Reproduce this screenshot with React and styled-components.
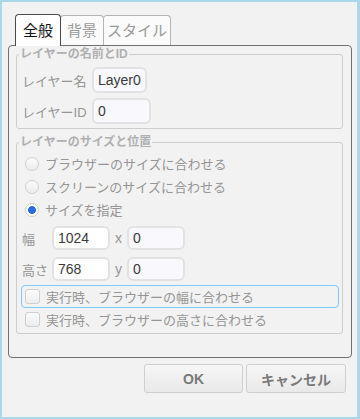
import React, { useState } from 'react';
import styled, { createGlobalStyle } from 'styled-components';

const GlobalStyle = createGlobalStyle`
  html, body {
    margin: 0;
    padding: 0;
    background: #f2f2f2;
  }
  * {
    box-sizing: border-box;
  }
`;

const FONT = `"Liberation Sans", "Noto Sans CJK JP", sans-serif`;

function App() {
  const [tab, setTab] = useState(0);
  const [mode, setMode] = useState(2);
  const [fitW, setFitW] = useState(false);
  const [fitH, setFitH] = useState(false);

  const tabs = [
    { label: '全般', w: 46 },
    { label: '背景', w: 44 },
    { label: 'スタイル', w: 68 },
  ];

  const radios = [
    'ブラウザーのサイズに合わせる',
    'スクリーンのサイズに合わせる',
    'サイズを指定',
  ];

  return (
    <>
      <GlobalStyle />
      <StDialog>
        <StTabs>
          {tabs.map((t, i) => (
            <StTab key={t.label} $w={t.w} $active={tab === i} onClick={() => setTab(i)}>
              {t.label}
            </StTab>
          ))}
        </StTabs>

        <StPanel>
          <StGroup>
            <StLegend>レイヤーの名前とID</StLegend>
            <StStack $pt={6} $gap={5}>
              <StRow>
                <StLabel $w={70}>レイヤー名</StLabel>
                <StInput $w={55} $h={26} $soft defaultValue='Layer0' />
              </StRow>
              <StRow>
                <StLabel $w={70}>レイヤーID</StLabel>
                <StInput $w={59} $h={26} $soft defaultValue='0' />
              </StRow>
            </StStack>
            <StSpacer $h={4} />
          </StGroup>

          <StGroup $mt={6}>
            <StLegend>レイヤーのサイズと位置</StLegend>
            <StStack $pt={3}>
              {radios.map((r, i) => (
                <StOption key={r} onClick={() => setMode(i)}>
                  <StRadio $checked={mode === i} />
                  {r}
                </StOption>
              ))}
              <StRow $mt={5}>
                <StLabel $w={30}>幅</StLabel>
                <StInput $w={58} $h={24} defaultValue='1024' />
                <StAxis>x</StAxis>
                <StInput $w={58} $h={24} $soft defaultValue='0' />
              </StRow>
              <StRow $mt={7}>
                <StLabel $w={30}>高さ</StLabel>
                <StInput $w={58} $h={24} defaultValue='768' />
                <StAxis>y</StAxis>
                <StInput $w={58} $h={24} $soft defaultValue='0' />
              </StRow>
              <StCheckRow $mt={4} $focus onClick={() => setFitW(!fitW)}>
                <StCheck $checked={fitW} />
                実行時、ブラウザーの幅に合わせる
              </StCheckRow>
              <StCheckRow onClick={() => setFitH(!fitH)}>
                <StCheck $checked={fitH} />
                実行時、ブラウザーの高さに合わせる
              </StCheckRow>
            </StStack>
            <StSpacer $h={2} />
          </StGroup>
        </StPanel>

        <StFooter>
          <StButton $w={99}>OK</StButton>
          <StButton $w={100}>キャンセル</StButton>
        </StFooter>
      </StDialog>
    </>
  );
}

export default App;

const StDialog = styled.div`
  width: 360px;
  height: 419px;
  border-style: solid;
  border-color: #a9d8e8;
  border-width: 2px 3px 2px 2px;
  background: #f2f2f2;
  padding: 12px 5px 0 6px;
  font-family: ${FONT};
  display: flex;
  flex-direction: column;
`;

const StTabs = styled.div`
  display: flex;
  align-items: flex-end;
  height: 31px;
  padding-left: 7px;
`;

const StTab = styled.div`
  position: relative;
  width: ${(p) => p.$w}px;
  height: ${(p) => (p.$active ? 32 : 30)}px;
  margin-bottom: ${(p) => (p.$active ? -1 : 0)}px;
  margin-left: ${(p) => (p.$active ? 0 : -1)}px;
  z-index: ${(p) => (p.$active ? 2 : 1)};
  border: 1px solid ${(p) => (p.$active ? '#4a4a4a' : '#b4b4b4')};
  border-bottom: none;
  border-radius: 4px 4px 0 0;
  background: ${(p) => (p.$active ? '#ffffff' : '#fbfbfb')};
  color: ${(p) => (p.$active ? '#111111' : '#9a9a9a')};
  font-size: 15px;
  line-height: ${(p) => (p.$active ? 31 : 29)}px;
  text-align: center;
  cursor: pointer;
  &:first-child {
    margin-left: 0;
  }
`;

const StPanel = styled.div`
  height: 313px;
  border: 1px solid #707070;
  border-radius: 4px;
  padding: 1px 8px 0 7px;
`;

const StGroup = styled.fieldset`
  margin: ${(p) => p.$mt || 0}px 0 0;
  padding: 0 0 0 5px;
  min-width: 0;
  border: 1px solid #cdcdcd;
  border-radius: 3px;
`;

const StLegend = styled.legend`
  margin-left: -3px;
  padding: 0 1px;
  font-family: ${FONT};
  font-size: 12px;
  font-weight: bold;
  line-height: 14px;
  color: #b0b0b0;
`;

const StStack = styled.div`
  display: flex;
  flex-direction: column;
  gap: ${(p) => p.$gap || 0}px;
  padding-top: ${(p) => p.$pt || 0}px;
`;

const StSpacer = styled.div`
  height: ${(p) => p.$h}px;
`;

const StRow = styled.div`
  display: flex;
  align-items: center;
  margin-top: ${(p) => p.$mt || 0}px;
`;

const StLabel = styled.span`
  width: ${(p) => p.$w}px;
  flex: none;
  font-size: 13px;
  color: #959595;
  white-space: nowrap;
`;

const StInput = styled.input`
  width: ${(p) => p.$w}px;
  height: ${(p) => p.$h}px;
  border: 2px solid #e2e2e2;
  border-radius: 6px;
  background: ${(p) => (p.$soft ? '#f8f8fd' : '#ffffff')};
  padding: 0 4px;
  font-family: ${FONT};
  font-size: 14px;
  color: #3a3a3a;
  &:focus {
    outline: none;
  }
`;

const StAxis = styled.span`
  width: 17px;
  text-align: center;
  font-size: 14px;
  color: #959595;
`;

const StOption = styled.div`
  display: flex;
  align-items: center;
  height: 23px;
  padding-left: 3px;
  gap: 6px;
  font-size: 13px;
  color: #959595;
  cursor: pointer;
`;

const StRadio = styled.span`
  width: 14px;
  height: 14px;
  flex: none;
  border-radius: 50%;
  border: 1px solid #cfcfcf;
  background: ${(p) =>
    p.$checked
      ? 'radial-gradient(circle, #2b6de0 0 3.6px, #ffffff 4.2px)'
      : 'linear-gradient(#fbfbfb, #ececec)'};
`;

const StCheckRow = styled.div`
  display: flex;
  align-items: center;
  height: 23px;
  width: 318px;
  margin: ${(p) => p.$mt || 0}px 0 0 -1px;
  padding-left: 3px;
  gap: 6px;
  border: 1px solid ${(p) => (p.$focus ? '#7ccaf7' : 'transparent')};
  border-radius: 4px;
  font-size: 13px;
  color: #959595;
  cursor: pointer;
`;

const StCheck = styled.span`
  width: 15px;
  height: 15px;
  flex: none;
  border: 1px solid #cfcfcf;
  border-radius: 3px;
  background: linear-gradient(#fbfbfb, #ededed);
  color: #2b6de0;
  font-size: 12px;
  line-height: 13px;
  text-align: center;
  &::after {
    content: '${(p) => (p.$checked ? '✓' : '')}';
  }
`;

const StFooter = styled.div`
  display: flex;
  justify-content: flex-end;
  gap: 3px;
  margin-top: 6px;
  padding-right: 6px;
`;

const StButton = styled.button`
  width: ${(p) => p.$w}px;
  height: 29px;
  border: 1px solid #cfcfcf;
  border-radius: 3px;
  background: linear-gradient(#f6f6f6, #e9e9e9);
  font-family: ${FONT};
  font-size: 14px;
  font-weight: bold;
  color: #7a7a7a;
  cursor: pointer;
`;
